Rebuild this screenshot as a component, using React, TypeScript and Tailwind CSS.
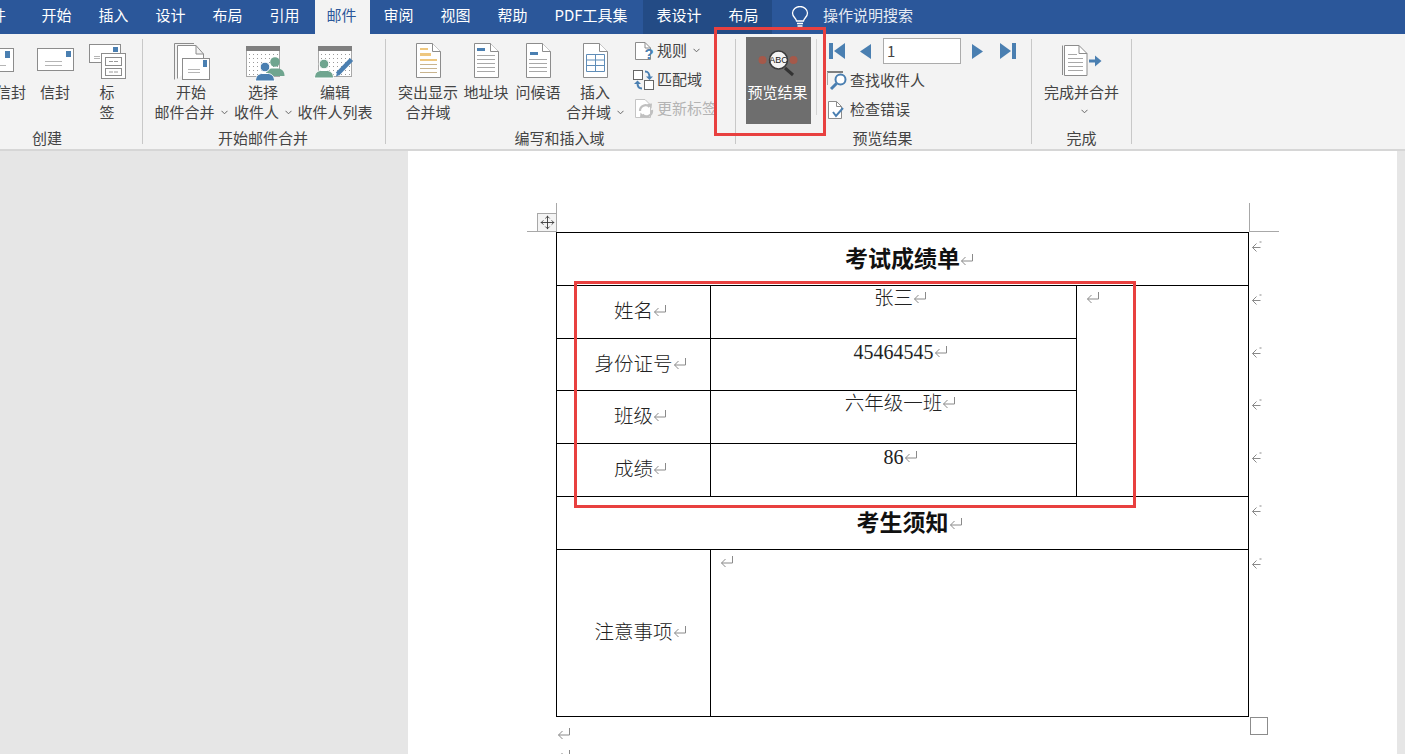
import type { ReactNode } from "react";
import { Move } from "lucide-react";
import clsx from "clsx";

const BLUE = "#4a7fb1";
const LINE = "#8c8c8c";
const GREEN = "#6fa58f";

function Chevron() {
  return (
    <svg width="7" height="5" viewBox="0 0 7 5" className="inline-block">
      <path d="M0.5 0.8 3.5 3.8 6.5 0.8" fill="none" stroke="#666" strokeWidth="1" />
    </svg>
  );
}

function Group({
  label,
  className,
  labelClass,
  children,
}: {
  label: string;
  className?: string;
  labelClass?: string;
  children: ReactNode;
}) {
  return (
    <div className={clsx("my-[5px] flex shrink-0 flex-col border-r border-[#c8c8c8]", className)}>
      <div className="flex h-[90px]">{children}</div>
      <div className={clsx("h-[16px] text-center text-[15px] leading-[20px] text-[#444]", labelClass)}>{label}</div>
    </div>
  );
}

function Big({
  icon,
  lines,
  chevron,
  className,
}: {
  icon: ReactNode;
  lines: string[];
  chevron?: boolean;
  className?: string;
}) {
  return (
    <div className={clsx("flex shrink-0 flex-col items-center", className)}>
      <div className="mt-[2px] mb-[1px] h-[40px] w-[44px]">{icon}</div>
      {lines.map((l, i) => (
        <div key={i} className="flex items-center gap-[6px] whitespace-nowrap text-[15px] leading-[20px] text-[#444]">
          {l}
          {chevron && i === lines.length - 1 && <Chevron />}
        </div>
      ))}
    </div>
  );
}

function Icon({ children }: { children: ReactNode }) {
  return (
    <svg width="44" height="40" viewBox="0 0 44 40" className="overflow-visible">
      {children}
    </svg>
  );
}

function EnvelopeIcon() {
  return (
    <Icon>
      <rect x="4.5" y="7.5" width="36" height="22" fill="#fff" stroke={LINE} />
      <rect x="33" y="10" width="5" height="6" fill={BLUE} />
      <path d="M12 20.5H29M12 24.5H29" stroke="#b5b5b5" />
    </Icon>
  );
}

function CutEnvelopeIcon() {
  return (
    <Icon>
      <rect x="-6.5" y="7.5" width="31" height="23" fill="#fff" stroke={LINE} />
      <rect x="16" y="10" width="5" height="7" fill={BLUE} />
      <path d="M2 24.5H17" stroke="#b5b5b5" />
    </Icon>
  );
}

function LabelIcon() {
  return (
    <Icon>
      <rect x="4.5" y="3.5" width="31" height="18" fill="#fff" stroke={LINE} />
      <rect x="28" y="6" width="5" height="5" fill={BLUE} />
      <path d="M9 15.5H15M9 17.5H15" stroke="#b5b5b5" />
      <rect x="16.5" y="12.5" width="24" height="25" fill="#fff" stroke={LINE} />
      <rect x="20.5" y="16.5" width="16" height="8" fill="#fff" stroke={LINE} />
      <rect x="20.5" y="27.5" width="16" height="7" fill="#fff" stroke={LINE} />
      <path d="M24 20.5H33M24 31H33" stroke="#999" strokeDasharray="4 1" />
    </Icon>
  );
}

function MergeIcon() {
  return (
    <Icon>
      <path d="M5.5 38.5V2.5H25" fill="none" stroke={LINE} />
      <path d="M8.5 37.5V4.5H27L34.5 13V18M27 4.5V13H34.5" fill="#fff" stroke={LINE} />
      <rect x="13.5" y="17.5" width="27" height="21" fill="#fff" stroke={LINE} />
      <rect x="34" y="19" width="4" height="7" fill={BLUE} />
      <path d="M19 28.5H31M19 31.5H31" stroke="#b5b5b5" />
    </Icon>
  );
}

function Calendar() {
  const dots: ReactNode[] = [];
  for (let y = 0; y < 6; y++) {
    for (let x = 0; x < 8; x++) {
      dots.push(<rect key={`${x}-${y}`} x={8 + x * 4} y={13 + y * 4} width="1" height="1" fill="#9a9a9a" />);
    }
  }
  return (
    <>
      <rect x="5.5" y="5.5" width="33" height="30" fill="#fff" stroke="#a8a8a8" />
      <rect x="5" y="5" width="34" height="5" fill="#7f7f7f" />
      {dots}
    </>
  );
}

function Person({ x, y, color, ring }: { x: number; y: number; color: string; ring?: boolean }) {
  return (
    <g stroke={ring ? "#fff" : "none"} strokeWidth={ring ? 1 : 0}>
      <path
        d={`M${x - 9.5} ${y + 14}c0-5 3-7 6-7.5h7c3 .5 6 2.5 6 7.5z`}
        fill={color}
      />
      <circle cx={x} cy={y} r="4.8" fill={color} />
    </g>
  );
}

function PickIcon() {
  return (
    <Icon>
      <Calendar />
      <Person x={34} y={21} color={GREEN} />
      <Person x={24} y={26} color={BLUE} ring />
    </Icon>
  );
}

function EditListIcon() {
  return (
    <Icon>
      <Calendar />
      <Person x={11} y={23} color={GREEN} ring />
      <path d="M24.5 33 38.5 18.5" stroke={BLUE} strokeWidth="4.5" />
      <path d="M23 35.5 24 31.5 26.5 34Z" fill={BLUE} />
    </Icon>
  );
}

function Page({ x, children }: { x: number; children?: ReactNode }) {
  return (
    <Icon>
      <path
        d={`M${x + 0.5} 2.5H${x + 16.5}L${x + 24.5} 10.5V36.5H${x + 0.5}Z`}
        fill="#fff"
        stroke={LINE}
      />
      <path d={`M${x + 16.5} 2.5V10.5H${x + 24.5}`} fill="#fff" stroke={LINE} />
      {children}
    </Icon>
  );
}

function HighlightIcon() {
  return (
    <Page x={10}>
      <rect x="14" y="7" width="8" height="2" fill="#eec77f" />
      <rect x="14" y="12" width="11" height="3" fill="#eec77f" />
      <rect x="14" y="18" width="17" height="2" fill="#eec77f" />
      <path d="M14 23.5H31M14 27.5H31M14 31.5H31" stroke="#c9b48e" />
    </Page>
  );
}

function AddressIcon() {
  return (
    <Page x={10}>
      <rect x="13" y="7" width="8" height="3" fill={BLUE} />
      <path d="M13 14.5H31M13 18.5H31M13 22.5H31M13 26.5H31M13 30.5H31" stroke="#a8a8a8" />
    </Page>
  );
}

function GreetingIcon() {
  return (
    <Page x={10}>
      <rect x="14" y="11" width="8" height="3" fill={BLUE} />
      <path d="M13 18.5H31M13 22.5H31M13 26.5H31M13 30.5H31" stroke="#a8a8a8" />
    </Page>
  );
}

function InsertIcon() {
  return (
    <Page x={10}>
      <path
        d="M13.5 13.5H31.5V30.5H13.5ZM13.5 19H31.5M13.5 24.5H31.5M22.5 13.5V30.5"
        fill="none"
        stroke="#5f8db8"
      />
    </Page>
  );
}

function PreviewIcon() {
  return (
    <Icon>
      <circle cx="5.5" cy="19" r="4" fill="#a5594a" />
      <circle cx="36.5" cy="19" r="4" fill="#a5594a" />
      <path d="M28 27 36 34" stroke="#333" strokeWidth="3" />
      <circle cx="21.5" cy="19" r="9" fill="#f4f4f4" stroke="#3c3c3c" strokeWidth="1.5" />
      <text x="21.5" y="22" textAnchor="middle" fontSize="9" fontFamily="'Liberation Sans', sans-serif" fill="#222">
        ABC
      </text>
    </Icon>
  );
}

function FinishIcon() {
  return (
    <Icon>
      <path d="M2.5 34V4.5" stroke={LINE} fill="none" />
      <path d="M4.5 34.5V4.5H19L27 12.5V34.5Z" fill="#fff" stroke={LINE} />
      <path d="M19 4.5V12.5H27" fill="none" stroke={LINE} />
      <path d="M8 13.5H17M8 17.5H23M8 21.5H23M8 25.5H23M8 29.5H23" stroke="#a8a8a8" />
      <path d="M29 20H38" stroke={BLUE} strokeWidth="3" />
      <path d="M35 14.5 41.5 20 35 25.5Z" fill={BLUE} />
    </Icon>
  );
}

function Small({ icon, label, muted, className }: { icon: ReactNode; label: string; muted?: boolean; className?: string }) {
  return (
    <div className={clsx("flex h-[29px] items-center whitespace-nowrap text-[15px]", muted ? "text-[#b4b4b4]" : "text-[#444]", className)}>
      {icon}
      {label}
    </div>
  );
}

function RuleIcon() {
  return (
    <svg width="22" height="20" viewBox="0 0 22 20" className="mr-[1px] ml-[4px]">
      <path d="M1.5 1.5H11L16.5 7V18.5H1.5Z" fill="#fff" stroke={LINE} />
      <path d="M11 1.5V7H16.5" fill="none" stroke={LINE} />
      <text x="15" y="18" textAnchor="middle" fontSize="15" fontWeight="700" fontFamily="'Liberation Sans', sans-serif" fill={BLUE}>
        ?
      </text>
    </svg>
  );
}

function MatchIcon() {
  return (
    <svg width="22" height="20" viewBox="0 0 22 20" className="mr-[2px] ml-[3px]">
      <rect x="0.5" y="0.5" width="9" height="9" fill="#fff" stroke="#666" />
      <rect x="11.5" y="10.5" width="9" height="9" fill="#fff" stroke="#666" />
      <path d="M12 1.5C16 1.5 16.5 4 16.5 8" fill="none" stroke={BLUE} strokeWidth="2" />
      <path d="M13 6.5H20L16.5 10Z" fill={BLUE} />
      <path d="M9 18.5C5 18.5 4.5 16 4.5 13" fill="none" stroke={BLUE} strokeWidth="2" />
      <path d="M1 14H8L4.5 10.5Z" fill={BLUE} />
    </svg>
  );
}

function UpdateIcon() {
  return (
    <svg width="22" height="20" viewBox="0 0 22 20" className="ml-[5px]">
      <path d="M0.5 0.5H10L15.5 6V18.5H0.5Z" fill="#fff" stroke="#c4c4c4" />
      <path d="M5 12a5.5 5.5 0 0 1 9.5-4M17 11a5.5 5.5 0 0 1-9.5 4.5" fill="none" stroke="#c0c0c0" strokeWidth="2.2" />
      <path d="M12 5 17 4.5 16.5 9.5ZM10 18 5 18.5 5.5 13.5Z" fill="#c0c0c0" />
    </svg>
  );
}

function FindIcon() {
  return (
    <svg width="22" height="20" viewBox="0 0 22 20" className="mr-[2px]">
      <path d="M1 1H17" stroke="#7f7f7f" strokeWidth="2" />
      <path d="M1.5 1V14" stroke="#a8a8a8" />
      <circle cx="14.5" cy="8.5" r="5" fill="#fff" stroke={BLUE} strokeWidth="2" />
      <path d="M10.5 12.5 5 18" stroke={BLUE} strokeWidth="3" />
    </svg>
  );
}

function CheckIcon() {
  return (
    <svg width="22" height="20" viewBox="0 0 22 20" className="mr-[2px]">
      <path d="M2.5 1.5H10.5L15.5 6.5V18.5H2.5Z" fill="#fff" stroke={LINE} />
      <path d="M10.5 1.5V6.5H15.5" fill="none" stroke={LINE} />
      <path d="M7 12 10 16 17 8" fill="none" stroke={BLUE} strokeWidth="2" />
    </svg>
  );
}

function NavEdge({ flip }: { flip?: boolean }) {
  return (
    <svg width="16" height="16" viewBox="0 0 16 16" className={flip ? "-scale-x-100" : ""}>
      <rect x="0" y="0" width="4" height="16" fill={BLUE} />
      <path d="M16 0V16L5 8Z" fill={BLUE} />
    </svg>
  );
}

function NavArrow({ flip }: { flip?: boolean }) {
  return (
    <svg width="11" height="15" viewBox="0 0 11 15" className={flip ? "-scale-x-100" : ""}>
      <path d="M11 0V15L0 7.5Z" fill={BLUE} />
    </svg>
  );
}

function Tab({ label, className }: { label: string; className: string }) {
  return (
    <div className={clsx("flex h-full shrink-0 items-center justify-center pb-[3px] text-[15px] whitespace-nowrap text-white", className)}>
      {label}
    </div>
  );
}

function Mark({ className }: { className?: string }) {
  return (
    <svg width="14" height="13" viewBox="0 0 14 13" className={clsx("inline-block align-[1px]", className)}>
      <path d="M12.5 1V8H1.5M5.5 4 1.5 8 5.5 12" fill="none" stroke="#8a8a8a" />
    </svg>
  );
}

function CenterMark() {
  return <Mark className="-mr-[14px]" />;
}

function RowMark() {
  return (
    <td className="p-0 pt-[7px] pl-[2px] align-top leading-none">
      <svg width="11" height="13" viewBox="0 0 11 13" className="block">
        <path d="M9.5 7.5H1.5M5.5 3.5 1.5 7.5 5.5 11.5M8.5 2H10.5" fill="none" stroke="#8a8a8a" />
      </svg>
    </td>
  );
}

const cell = "border border-black p-0";
const title = "h-[53px] border border-black p-0 pb-[4px] text-center text-[23px] font-bold text-[#111]";
const head = "border border-black p-0 pb-[4px] text-center text-[19.5px] font-light text-[#222]";
const value = "border border-black p-0 text-center align-top text-[19.5px] leading-[22px] font-light text-[#222]";
const digits = "border border-black p-0 text-center align-top font-['Liberation_Serif','Noto_Sans_CJK_SC',serif] text-[20px] leading-[26px] text-[#222]";

export default function App() {
  return (
    <div className="relative h-[754px] w-[1405px] overflow-hidden bg-[#e6e6e6] font-['Noto_Sans_CJK_SC','Liberation_Sans',sans-serif]">
      {/* tabs */}
      <div className="flex h-[34px] bg-[#2b579a]">
        <Tab label="文件" className="-ml-[35px] mr-[11px] w-[52px]" />
        <Tab label="开始" className="w-[57px]" />
        <Tab label="插入" className="w-[57px]" />
        <Tab label="设计" className="w-[57px]" />
        <Tab label="布局" className="w-[57px]" />
        <Tab label="引用" className="w-[57px]" />
        <Tab label="邮件" className="ml-[2px] w-[55px] bg-[#f3f3f3] pr-[2px] !text-[#2b579a]" />
        <Tab label="审阅" className="w-[57px]" />
        <Tab label="视图" className="w-[57px]" />
        <Tab label="帮助" className="w-[57px]" />
        <Tab label="PDF工具集" className="mr-[2px] w-[100px]" />
        <div className="flex h-full bg-[#234b85]">
          <Tab label="表设计" className="w-[72px]" />
          <Tab label="布局" className="w-[57px]" />
        </div>
        <div className="ml-[19px] flex items-center pb-[1px]">
          <svg width="18" height="22" viewBox="0 0 18 22" fill="none" stroke="#fff" strokeWidth="1.3">
            <path d="M5.5 15C5 12 1.5 11 1.5 7a7.5 6.5 0 0 1 15 0c0 4-3.5 5-4 8Z" />
            <path d="M6 17.5H12M6.5 20H11.5" />
          </svg>
        </div>
        <Tab label="操作说明搜索" className="ml-[14px] w-[90px] !text-[#e6ebf3]" />
      </div>

      {/* ribbon */}
      <div className="flex h-[117px] border-b-2 border-[#d6d6d6] bg-[#f3f3f3]">
        <Group label="创建" className="-ml-[48px] w-[191px]">
          <Big icon={<CutEnvelopeIcon />} lines={["信封"]} className="ml-[37px] w-[44px]" />
          <Big icon={<EnvelopeIcon />} lines={["信封"]} className="w-[44px]" />
          <Big icon={<LabelIcon />} lines={["标", "签"]} className="ml-[8px] w-[44px]" />
        </Group>
        <Group label="开始邮件合并" className="w-[243px]" labelClass="pr-[2px]">
          <Big icon={<MergeIcon />} lines={["开始", "邮件合并"]} chevron className="ml-[9px] w-[78px]" />
          <Big icon={<PickIcon />} lines={["选择", "收件人"]} chevron className="w-[66px]" />
          <Big icon={<EditListIcon />} lines={["编辑", "收件人列表"]} className="w-[78px]" />
        </Group>
        <Group label="编写和插入域" className="w-[350px]" labelClass="pr-[2px]">
          <Big icon={<HighlightIcon />} lines={["突出显示", "合并域"]} className="ml-[10px] w-[64px]" />
          <Big icon={<AddressIcon />} lines={["地址块"]} className="ml-[2px] w-[48px]" />
          <Big icon={<GreetingIcon />} lines={["问候语"]} className="ml-[4px] w-[48px]" />
          <Big icon={<InsertIcon />} lines={["插入", "合并域"]} chevron className="ml-[2px] w-[62px]" />
          <div className="-mt-[3px] ml-[4px] flex flex-col">
            <div className="flex h-[29px] items-center gap-[6px]">
              <Small icon={<RuleIcon />} label="规则" />
              <Chevron />
            </div>
            <Small icon={<MatchIcon />} label="匹配域" />
            <Small icon={<UpdateIcon />} label="更新标签" muted />
          </div>
        </Group>
        <Group label="预览结果" className="w-[296px]" labelClass="pr-[2px]">
          <div className="-mt-[2px] ml-[10px] flex h-[87px] w-[65px] shrink-0 flex-col items-center bg-[#6e6e6e]">
            <div className="mt-[4px] mb-[1px] h-[40px] w-[44px]">
              <PreviewIcon />
            </div>
            <div className="-ml-[2px] text-[15px] leading-[20px] whitespace-nowrap text-white">预览结果</div>
          </div>
          <div className="ml-[5px] h-[76px] w-px bg-[#d4d4d4]" />
          <div className="-mt-[1px] ml-[9px] flex flex-col">
            <div className="flex h-[26px] items-center pl-[3px]">
              <NavEdge />
              <div className="ml-[15px]">
                <NavArrow />
              </div>
              <div className="ml-[12px] flex h-[26px] w-[78px] items-center border border-[#ababab] bg-white pl-[3px] text-[15px] text-[#444]">
                1
              </div>
              <div className="ml-[11px]">
                <NavArrow flip />
              </div>
              <div className="ml-[17px]">
                <NavEdge flip />
              </div>
            </div>
            <Small icon={<FindIcon />} label="查找收件人" className="mt-[2px]" />
            <Small icon={<CheckIcon />} label="检查错误" />
          </div>
        </Group>
        <Group label="完成" className="w-[100px]">
          <div className="flex w-full flex-col items-center">
            <div className="mt-[2px] mb-[1px] h-[40px] w-[44px]">
              <FinishIcon />
            </div>
            <div className="text-[15px] leading-[20px] whitespace-nowrap text-[#444]">完成并合并</div>
            <div className="ml-[5px] flex h-[18px] items-center">
              <Chevron />
            </div>
          </div>
        </Group>
      </div>

      {/* page */}
      <div className="ml-[408px] h-[603px] w-[989px] bg-white pt-[52px] pl-[119px]">
        <div className="flex h-[29px]">
          <div className="relative h-[29px] w-[30px] border-r border-b border-[#a8a8a8]">
            <div className="absolute top-[10px] left-[10px] flex h-[19px] w-[20px] items-center justify-center border border-[#a8a8a8] bg-[#f4f4f4] text-[#333]">
              <Move size={15} strokeWidth={1.4} />
            </div>
          </div>
          <div className="w-[692px]" />
          <div className="h-[29px] w-[30px] border-b border-l border-[#a8a8a8]" />
        </div>
        <table className="ml-[29px] w-[724px] table-fixed border-collapse">
          <colgroup>
            <col className="w-[154px]" />
            <col className="w-[366px]" />
            <col className="w-[172px]" />
            <col className="w-[32px]" />
          </colgroup>
          <tbody>
            <tr className="h-[53px]">
              <td colSpan={3} className={title}>
                考试成绩单
                <CenterMark />
              </td>
              <RowMark />
            </tr>
            <tr className="h-[53px]">
              <td className={head}>
                姓名
                <CenterMark />
              </td>
              <td className={value}>
                张三
                <CenterMark />
              </td>
              <td rowSpan={4} className={clsx(cell, "pt-[2px] pl-[9px] align-top leading-[20px]")}>
                <Mark />
              </td>
              <RowMark />
            </tr>
            <tr className="h-[52px]">
              <td className={head}>
                身份证号
                <CenterMark />
              </td>
              <td className={digits}>
                45464545
                <CenterMark />
              </td>
              <RowMark />
            </tr>
            <tr className="h-[53px]">
              <td className={head}>
                班级
                <CenterMark />
              </td>
              <td className={value}>
                六年级一班
                <CenterMark />
              </td>
              <RowMark />
            </tr>
            <tr className="h-[53px]">
              <td className={head}>
                成绩
                <CenterMark />
              </td>
              <td className={digits}>
                86
                <CenterMark />
              </td>
              <RowMark />
            </tr>
            <tr className="h-[53px]">
              <td colSpan={3} className={title}>
                考生须知
                <CenterMark />
              </td>
              <RowMark />
            </tr>
            <tr className="h-[167px]">
              <td className={head}>
                注意事项
                <CenterMark />
              </td>
              <td colSpan={2} className={clsx(cell, "pt-[2px] pl-[9px] align-top leading-[20px]")}>
                <Mark />
              </td>
              <RowMark />
            </tr>
          </tbody>
        </table>
        <div className="ml-[30px] flex w-[711px] items-start justify-between">
          <div className="pt-[7px] leading-[20px]">
            <Mark />
            <div className="mt-[2px]">
              <Mark />
            </div>
          </div>
          <div className="h-[18px] w-[18px] border border-[#8c8c8c]" />
        </div>
      </div>

      {/* red callouts */}
      <div className="absolute top-[27px] left-[714px] h-[109px] w-[112px] border-[3px] border-[#e8403f]" />
      <div className="absolute top-[281px] left-[574px] h-[227px] w-[562px] border-[3px] border-[#e8403f]" />
    </div>
  );
}
